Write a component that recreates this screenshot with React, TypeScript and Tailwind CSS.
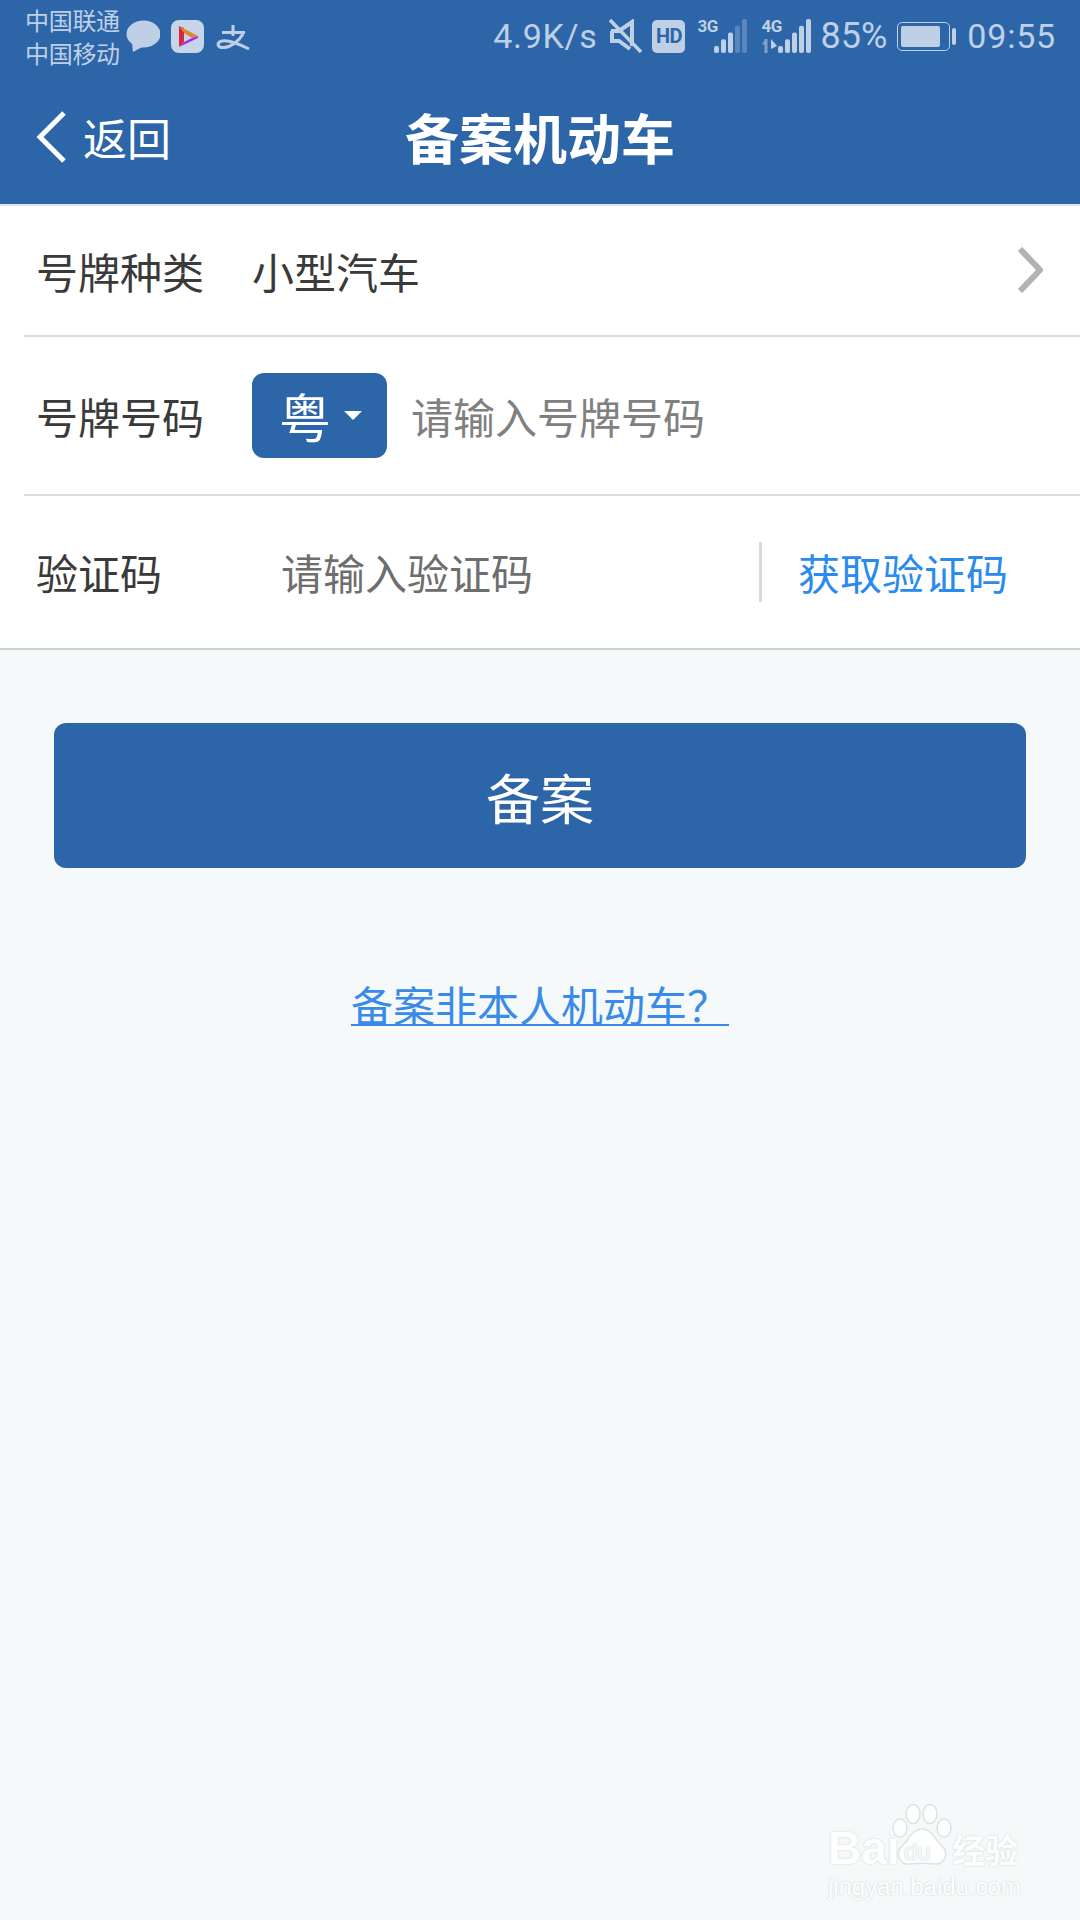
const CJK = "font-['Noto_Sans_CJK_SC','Noto_Sans',sans-serif]";

function Bars({ lit, total }: { lit: number; total: number }) {
  const bars = Array.from({ length: total }, (_, i) => i);
  return (
    <svg width={total * 7} height="34" viewBox={`0 0 ${total * 7} 34`}>
      {bars.map((i) => {
        const h = 7 + (27 * i) / (total - 1);
        return (
          <rect
            key={i}
            x={i * 7}
            y={34 - h}
            width="5"
            height={h}
            rx="2"
            fill={i < lit ? "#bfd0e6" : "#5b86bb"}
          />
        );
      })}
    </svg>
  );
}

function StatusBar() {
  return (
    <div className="flex h-[70px] items-center justify-between pl-[25px] pr-[24px] text-[#bfd0e6]">
      <div className="flex items-center">
        <div className={`${CJK} mt-[1px] flex w-[101px] flex-col text-[24px] leading-[33px] tracking-[-0.3px]`}>
          <span>中国联通</span>
          <span>中国移动</span>
        </div>
        <svg width="34" height="34" viewBox="0 0 34 34" className="mt-[4px]">
          <ellipse cx="17.5" cy="14" rx="17" ry="13.5" fill="#bfd0e6" />
          <path d="M6 23 L7 32 L18 26 Z" fill="#bfd0e6" />
        </svg>
        <div className="ml-[11px] mt-[3px] flex h-[33px] w-[33px] items-center justify-center rounded-[8px] bg-[#c6d5e8]">
          <svg width="22" height="24" viewBox="0 0 22 24">
            <path d="M2 1 L7 3 L7 17 L2 22 Z" fill="#d8263f" />
            <path d="M2 1 L21 11 L15 13 L7 8 Z" fill="#d98a2c" />
            <path d="M2 22 L7 17 L15 13 L21 11 L21 13 Z" fill="#b026e8" />
          </svg>
        </div>
        <svg width="34" height="28" viewBox="0 0 34 28" className="ml-[12px] mt-[5px]">
          <path
            d="M6 8.5 H29 M17 1 V12 M27 10 C23 17 15 23 8 23.5 C1 24 0 18 6 17 C13 15.5 23 20 33 25"
            fill="none"
            stroke="#bfd0e6"
            strokeWidth="3"
          />
        </svg>
      </div>
      <div className="mt-[2px] flex items-center">
        <span className="font-['Roboto',sans-serif] text-[34px] leading-none tracking-[0.7px]">4.9K/s</span>
        <svg width="34" height="34" viewBox="0 0 34 34" className="ml-[11px]">
          <path d="M3 12 H11 L24 3 V27 M4 12 V22 H11 L22 30" fill="none" stroke="#bfd0e6" strokeWidth="4" />
          <path d="M2 1 L33 33" stroke="#bfd0e6" strokeWidth="3.5" />
        </svg>
        <div className="ml-[10px] flex h-[33px] w-[33px] items-center justify-center rounded-[5px] bg-[#bfd0e6] font-['Roboto',sans-serif] text-[20px] font-bold leading-none tracking-[-0.5px] text-[#2c66a8]">
          HD
        </div>
        <div className="relative ml-[12px] flex h-[34px] w-[52px] justify-end">
          <span className="absolute left-0 top-[-2px] font-['Roboto',sans-serif] text-[17px] font-bold leading-[18px] tracking-[-0.5px]">3G</span>
          <Bars lit={3} total={5} />
        </div>
        <div className="relative ml-[12px] flex h-[34px] w-[52px] justify-end">
          <span className="absolute left-0 top-[-2px] font-['Roboto',sans-serif] text-[17px] font-bold leading-[18px] tracking-[-0.5px]">4G</span>
          <svg width="18" height="14" viewBox="0 0 18 14" className="absolute bottom-0 left-0">
            <path d="M5 0 V14" stroke="#7fa2cc" strokeWidth="3" />
            <path d="M1 5 L5 0 L5 6 Z" fill="#7fa2cc" />
            <path d="M10 0 V10 L16 7 Z" fill="#bfd0e6" />
          </svg>
          <Bars lit={5} total={5} />
        </div>
        <span className="ml-[7px] font-['Roboto',sans-serif] text-[36px] leading-none">85%</span>
        <div className="ml-[10px] flex items-center">
          <div className="flex h-[29px] w-[53px] items-center rounded-[5px] border-[1.5px] border-[#bfd0e6] p-[3px]">
            <div className="h-full w-[85%] rounded-[2px] bg-[#bfd0e6]" />
          </div>
          <div className="ml-[2px] h-[17px] w-[4px] rounded-[2px] bg-[#bfd0e6]" />
        </div>
        <span className="ml-[11px] font-['Roboto',sans-serif] text-[34px] leading-none tracking-[0.8px]">09:55</span>
      </div>
    </div>
  );
}

function NavBar() {
  return (
    <div className={`${CJK} grid h-[134px] grid-cols-3 items-center text-white`}>
      <div className="flex items-center pl-[36px]">
        <svg width="31" height="52" viewBox="0 0 31 52">
          <path d="M28 2 L4 26 L28 50" fill="none" stroke="#ffffff" strokeWidth="5" />
        </svg>
        <span className="ml-[16px] text-[44px] leading-none">返回</span>
      </div>
      <div className="whitespace-nowrap text-center text-[54px] font-bold leading-none">备案机动车</div>
      <div />
    </div>
  );
}

function Label({ children }: { children: string }) {
  return <span className="w-[216px] shrink-0 text-[42px] leading-none text-[#3a3a3a]">{children}</span>;
}

function Form() {
  return (
    <div className={`${CJK} border-y-2 border-t-[#dfe3e8] border-b-[#cdcfd0] bg-white`}>
      <div className="ml-[24px] flex h-[131px] items-center border-b-2 border-[#dcdcdc] pl-[12px]">
        <Label>号牌种类</Label>
        <span className="text-[42px] leading-none text-[#3a3a3a]">小型汽车</span>
        <svg width="26" height="46" viewBox="0 0 26 46" className="ml-auto mr-[37px] mt-[-2px]">
          <path d="M3 2 L23 23 L3 44" fill="none" stroke="#b3b3b3" strokeWidth="6" />
        </svg>
      </div>
      <div className="ml-[24px] flex h-[159px] items-center border-b-2 border-[#dcdcdc] pl-[12px]">
        <Label>号牌号码</Label>
        <div className="flex h-[85px] w-[135px] items-center rounded-[12px] bg-[#2c66a8] pl-[27px]">
          <span className="text-[52px] leading-none text-white">粤</span>
          <span className="ml-[13px] h-0 w-0 border-x-[9px] border-t-[9px] border-x-transparent border-t-white" />
        </div>
        <span className="ml-[24px] text-[42px] leading-none text-[#808080]">请输入号牌号码</span>
      </div>
      <div className="ml-[24px] flex h-[152px] items-center pl-[12px]">
        <span className="w-[245px] shrink-0 text-[42px] leading-none text-[#3a3a3a]">验证码</span>
        <span className="text-[42px] leading-none text-[#6e6e6e]">请输入验证码</span>
        <div className="ml-[226px] h-[60px] w-[3px] bg-[#d9d9d9]" />
        <span className="ml-[36px] text-[42px] leading-none text-[#2a8af0]">获取验证码</span>
      </div>
    </div>
  );
}

function Watermark() {
  return (
    <div className="absolute left-[828px] top-[1804px] h-[96px] w-[194px] font-['Liberation_Sans',sans-serif] text-white">
      <span className="absolute left-0 top-[24px] text-[46px] font-bold leading-[40px] [text-shadow:0_0_2px_#c9cdd0]">Bai</span>
      <svg width="60" height="62" viewBox="0 0 60 62" className="absolute left-[64px] top-0">
        <g fill="#ffffff" stroke="#dfe2e4" strokeWidth="1.5">
          <ellipse cx="8" cy="24" rx="7" ry="9" />
          <ellipse cx="21" cy="10" rx="7" ry="9.5" />
          <ellipse cx="38" cy="10" rx="7" ry="9.5" />
          <ellipse cx="52" cy="24" rx="7" ry="9" />
          <path d="M30 25 C40 25 43 36 50 42 C58 50 52 61 42 60 C34 59 26 59 18 60 C8 61 2 50 10 42 C17 36 20 25 30 25 Z" />
        </g>
      </svg>
      <span className="absolute left-[76px] top-[36px] text-[24px] leading-[24px] text-[#f5f9fa] [text-shadow:0_0_2px_#c2c6c9]">du</span>
      <span className={`${CJK} absolute left-[124px] top-[26px] whitespace-nowrap text-[33px] font-bold leading-[38px] [text-shadow:0_0_2px_#c9cdd0]`}>经验</span>
      <span className="absolute left-0 top-[70px] whitespace-nowrap text-[23.5px] leading-[26px] tracking-[0.2px] [text-shadow:0_0_2px_#c2c6c9]">jingyan.baidu.com</span>
    </div>
  );
}

export default function App() {
  return (
    <div className="relative h-[1920px] w-[1080px] overflow-hidden bg-[#f5f9fa]">
      <div className="h-[204px] bg-[#2c66a8]">
        <StatusBar />
        <NavBar />
      </div>
      <Form />
      <div className={`${CJK} flex flex-col items-center px-[54px] pt-[73px]`}>
        <div className="flex h-[145px] w-full items-center justify-center rounded-[12px] bg-[#2c66a8] text-[54px] leading-none text-white">
          <span className="mt-[3px]">备案</span>
        </div>
        <span className="mt-[113px] text-[42px] leading-[46px] text-[#3a8be8] underline underline-offset-[2px] decoration-2">
          备案非本人机动车？
        </span>
      </div>
      <Watermark />
    </div>
  );
}
